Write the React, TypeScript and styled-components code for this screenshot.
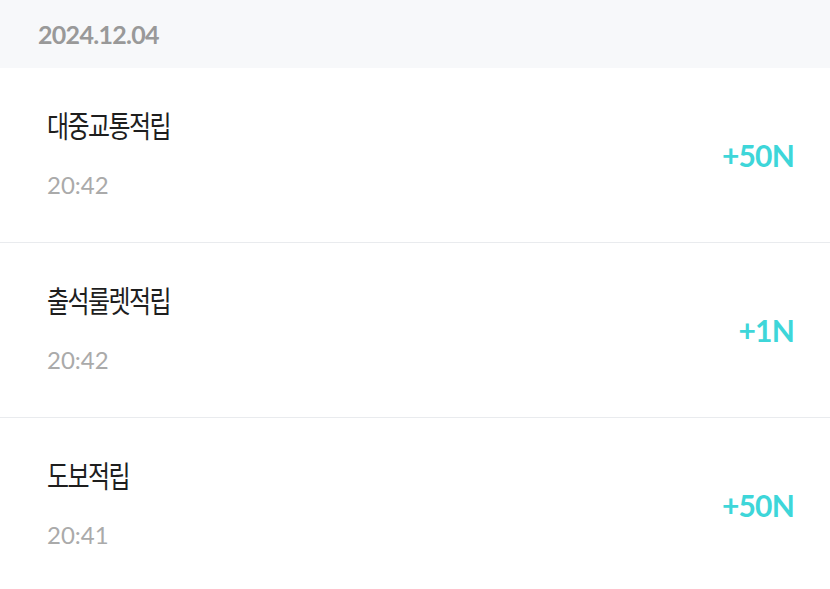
import React from "react";
import styled, { createGlobalStyle } from "styled-components";

const Global = createGlobalStyle`
  html, body { margin: 0; padding: 0; background: #ffffff; }
  body { font-family: Lato, "Noto Sans CJK KR", sans-serif; }
`;

const Page = styled.div`
  width: 830px;
  display: flex;
  flex-direction: column;
`;

const DateHeader = styled.div`
  height: 68px;
  background: #f7f8fa;
  display: flex;
  align-items: center;
  padding-left: 38px;
  font-family: Lato, sans-serif;
  font-weight: 700;
  font-size: 25px;
  color: #999999;
  letter-spacing: -0.7px;
`;

const Row = styled.div<{ $last?: boolean }>`
  height: 174px;
  display: flex;
  align-items: center;
  justify-content: space-between;
  padding: 0 36px 0 47px;
  border-bottom: ${(p) => (p.$last ? "none" : "1px solid #e9ebee")};
  box-sizing: content-box;
`;

const Info = styled.div`
  display: flex;
  flex-direction: column;
  gap: 28px;
  padding-bottom: 4px;
`;

const Title = styled.div`
  font-family: "Noto Sans CJK KR", sans-serif;
  font-weight: 400;
  font-size: 30px;
  line-height: 36px;
  color: #1e1e1e;
  letter-spacing: -2px;
  transform: scaleX(0.8);
  transform-origin: left center;
  white-space: nowrap;
`;

const Time = styled.div`
  font-family: Lato, sans-serif;
  font-size: 24px;
  line-height: 30px;
  color: #aaaaaa;
`;

const Amount = styled.div`
  font-family: Lato, sans-serif;
  font-weight: 700;
  font-size: 30px;
  color: #3ed6d9;
  letter-spacing: -0.8px;
`;

const items = [
  { title: "대중교통적립", time: "20:42", amount: "+50N" },
  { title: "출석룰렛적립", time: "20:42", amount: "+1N" },
  { title: "도보적립", time: "20:41", amount: "+50N" },
];

export default function App() {
  return (
    <Page>
      <Global />
      <DateHeader>2024.12.04</DateHeader>
      {items.map((it, i) => (
        <Row key={i} $last={i === items.length - 1}>
          <Info>
            <Title>{it.title}</Title>
            <Time>{it.time}</Time>
          </Info>
          <Amount>{it.amount}</Amount>
        </Row>
      ))}
    </Page>
  );
}
